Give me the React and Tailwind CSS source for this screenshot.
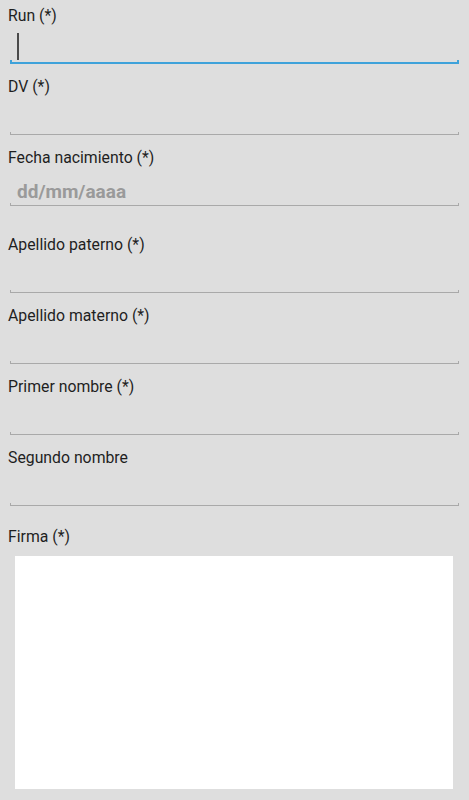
import React from "react";

// ─── Constants ────────────────────────────────────────────────────────────────

const FONT = { fontFamily: "Roboto, 'Noto Sans', sans-serif" };

const FIELDS = [
  { label: "Run (*)", focused: true },
  { label: "DV (*)" },
  { label: "Fecha nacimiento (*)", hint: "dd/mm/aaaa", extra: true },
  { label: "Apellido paterno (*)" },
  { label: "Apellido materno (*)" },
  { label: "Primer nombre (*)" },
  { label: "Segundo nombre", last: true },
];

// ─── Sub-components ───────────────────────────────────────────────────────────

const Underline = ({ focused }) =>
  focused ? (
    <div className="h-[4px] border-x-2 border-b-2 border-[#3ea2da]" />
  ) : (
    <div className="h-[3px] border-x border-b border-[#a9a9a9]" />
  );

const Label = ({ children }) => (
  <div className="h-[20px] px-[8px] text-[15.8px] leading-[18px] text-[#1f1f1f]">{children}</div>
);

function HoloField({ label, focused, hint, extra, last }) {
  const gap = extra ? "mb-[30px]" : last ? "mb-[22px]" : "mb-[14px]";
  return (
    <div className={gap}>
      <Label>{label}</Label>
      <div className="mx-[10px] flex h-[37px] flex-col">
        <div className="flex-1 pl-[7px]">
          {focused && <div className="mt-[6px] h-[27px] w-[2px] bg-[#4a4a4a]" />}
          {hint && (
            <div className="mt-[12px] text-[19px] font-bold leading-[22px] text-[#9a9a9a]">{hint}</div>
          )}
        </div>
        <Underline focused={focused} />
      </div>
    </div>
  );
}

// ─── Main Component ───────────────────────────────────────────────────────────

export default function App() {
  return (
    <div className="min-h-[800px] w-full bg-[#dedede] pt-[7px]" style={FONT}>
      {FIELDS.map((f) => (
        <HoloField key={f.label} {...f} />
      ))}

      <Label>Firma (*)</Label>
      <div className="ml-[15px] mr-[16px] mt-[8px] h-[233px] bg-white" />
    </div>
  );
}
